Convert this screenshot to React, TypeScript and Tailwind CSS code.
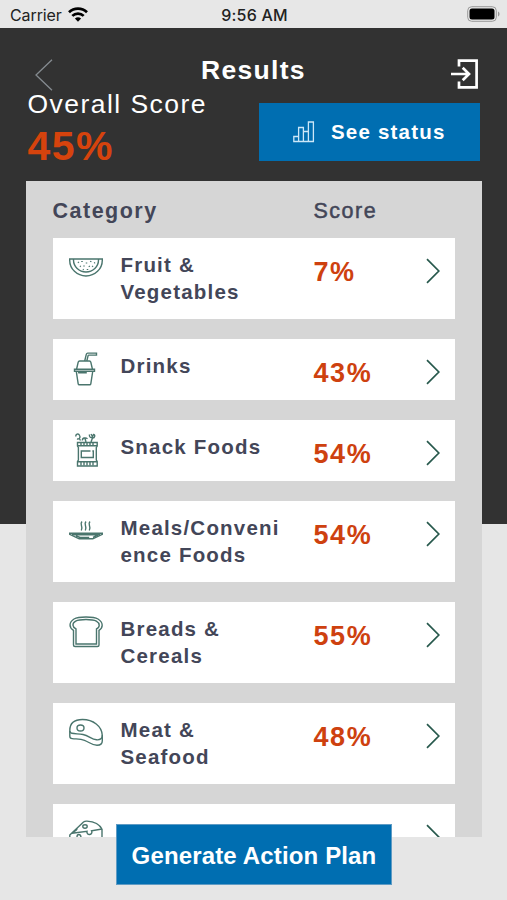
import { ReactNode } from "react";

interface CategoryProps {
  icon: ReactNode;
  name: string;
  score: string;
}

const iconClass = "block h-9 w-[34px] fill-none stroke-[#4a756d] stroke-[1.4]";

const MelonIcon = () => (
  <svg viewBox="0 -3.5 34 36" className={iconClass}>
    <path d="M.7 5.500h32.600v1.200a16.300 15.800 0 0 1-32.600 0z" />
    <path d="M4.500 5.500v1a12.500 12 0 0 0 25 0v-1" />
    <path
      d="M9 8.500l.8.800M13 7.500v1M17.500 9v1M22 7.500l-.5 1M26 9l-.8.600M11 12.500l.8.600M15 12v1M20 12.500l.6.900M24 12.500l-.8.700M14 15.800l.6.600M18.500 15.500v1"
      className="stroke-[1.5]"
    />
  </svg>
);

const DrinkIcon = () => (
  <svg viewBox="0 .5 34 36" className={iconClass}>
    <path d="M15.700 10.500l1.600-6.700c.2-.8.600-1.200 1.400-1.200h8.800v2h-7.600c-.5 0-.7.200-.8.600l-1.300 5.300" />
    <path d="M7.500 19l1.700-7.300c.2-.8.600-1.200 1.400-1.200h9.800c.8 0 1.200.4 1.400 1.200l1.700 7.300" />
    <path d="M5.500 18.800h20v2h-20zM7.300 21l1.900 12.300c.1.700.5 1 1.200 1h10.200c.7 0 1.100-.3 1.200-1L23.700 21M9.500 21l.3 1.200h8" />
  </svg>
);

const SnackIcon = () => (
  <svg viewBox="0 0 34 36" className={iconClass}>
    <path d="M8.500 10.500h19.700v3.500l-.9 1.500v12.500l.9 1.500v4.500H8.500v-4.500l.9-1.500V15.500l-.9-1.500z" />
    <path d="M9 13.800h19M9 29.800h19M12 10.500v3M15 10.500v3M18 10.500v3M21 10.500v3M24 10.500v3M12 30.500v3M15 30.500v3M18 30.500v3M21 30.500v3M24 30.500v3" />
    <path d="M21.500 19h-9.200v6.500h12V19h-1" />
    <path d="M7 4.500c-.7-2.500 2.500-3.300 3.500-1.200 1.500 2.200-.5 4.200-2.500 3.500M10 6l1.500 2.500M13.500 8.500c-.5-2.500 3-3.500 5-1.700M16 6.500l1 3.500M20.500 2.500c-.7 2.500 1.500 4 3 2.200l1-2.200c2 .2 1.500 3.700-1 3.500l-1.500 4M22 2l1.200 2" />
  </svg>
);

const MealIcon = () => (
  <svg viewBox="0 -2.5 34 36" className={iconClass}>
    <path d="M.7 17.700h32.600v1.100l-9.500 4.500H10.200L.7 18.800z" />
    <path d="M3 19.300h28M7 20.500l4.200 1.500h9M29 19.500l-5 2.500" />
    <path d="M13 6c-3 3 1.800 5-.7 9M17 6c-3 3 1.800 5-.7 9M21 6c-3 3 1.800 5-.7 9" />
  </svg>
);

const BreadIcon = () => (
  <svg viewBox="0 -.5 34 36" className={iconClass}>
    <path d="M17 2.500c5 0 9.500.5 12 2 5.500 3.300 5.300 8.800 1 11.300v14.700c0 1-.5 1.500-1.500 1.500H6c-1 0-1.500-.5-1.500-1.500V15.800c-4.600-2.500-4.800-8 .5-11.300 2.500-1.500 7-2 12-2z" />
    <path d="M17 5c4.300 0 8 .3 10.300 1.600 3.900 2.200 3.800 6 .2 7.800v15.100H7V14.400C3.200 12.600 2.800 8.800 6.700 6.600 9 5.300 12.700 5 17 5z" />
  </svg>
);

const MeatIcon = () => (
  <svg viewBox="0 0 34 36" className={iconClass}>
    <path d="M.8 15.500C.8 8 5.500 4.500 13.500 4.500 24 4.500 33 11 33.300 20.500c.1 3-2.300 4.700-5.800 4.300-5.300-.5-7.500-4.300-13.500-5.300-4.500-.8-7.500-.5-11.200-1.200C1.300 18 .8 17 .8 15.500z" />
    <path d="M.8 16v5.200c0 1.500.8 2.200 2.500 2.400 4.500.5 8.200.3 12.200 1.700 4.500 1.700 7.500 5 12.500 5 3.500 0 5.300-1.700 5.300-4.500V20" />
    <ellipse cx="11.500" cy="13" rx="3.500" ry="3" />
  </svg>
);

const CheeseIcon = () => (
  <svg viewBox="0 -1.5 34 36" className={iconClass}>
    <path d="M.8 17.500L14.500 4.500c1-.8 2-1 3.500-.9 7 .4 12.500 2.800 15 8.200v16L.8 31z" />
    <path d="M3 15.800l15-1.900a2.500 2.500 0 1 0 4.600-.6L33 11.500M4 14.500c2-.7 4-1.500 4-3.500" />
    <ellipse cx="16" cy="9" rx="2.200" ry="1.700" />
    <path d="M8 19.500c0-3.300 3.500-3.300 4 0" />
  </svg>
);

const categories: CategoryProps[] = [
  { icon: <MelonIcon />, name: "Fruit & Vegetables", score: "7%" },
  { icon: <DrinkIcon />, name: "Drinks", score: "43%" },
  { icon: <SnackIcon />, name: "Snack Foods", score: "54%" },
  { icon: <MealIcon />, name: "Meals/Convenience Foods", score: "54%" },
  { icon: <BreadIcon />, name: "Breads & Cereals", score: "55%" },
  { icon: <MeatIcon />, name: "Meat & Seafood", score: "48%" },
  { icon: <CheeseIcon />, name: "", score: "" },
];

const StatusBar = () => (
  <div className="grid h-7 grid-cols-3 items-center bg-[#e7e7e7] pl-[10px] pr-[7px] pt-[2px] font-['Inter',sans-serif] text-[16px] text-[#222]">
    <div className="flex items-center gap-[6px]">
      <span className="tracking-[-0.1px]">Carrier</span>
      <svg viewBox="0 0 20 15" className="-mt-px h-[15px] w-5 fill-none stroke-black stroke-[2.700]">
        <path d="M1 5.300a13 13 0 0 1 18 0M4.300 8.900a8.200 8.200 0 0 1 11.400 0" />
        <path d="M6.900 11.600a4.500 4.500 0 0 1 6.200 0L10 14.800z" className="fill-black stroke-none" />
      </svg>
    </div>
    <span className="-ml-px text-center font-medium tracking-[0.200px]">9:56 AM</span>
    <svg viewBox="0 0 33 16" className="-mt-[2px] h-4 w-[33px] justify-self-end">
      <rect x=".7" y=".7" width="28.600" height="14.600" rx="4" className="fill-none stroke-[#999] stroke-1" />
      <rect x="2.500" y="2.500" width="25" height="11" rx="2.500" />
      <path d="M31 5.500c2 .8 2 4.200 0 5z" className="fill-[#999]" />
    </svg>
  </div>
);

const Header = () => (
  <header className="px-[27px] text-white">
    <div className="flex h-[61px] items-end justify-between">
      <svg viewBox="0 0 18 32" className="-mb-[2px] ml-2 h-8 w-[18px] fill-none stroke-[#858b90] stroke-[1.300]">
        <path d="M17 .7L1 16l16 15.300" />
      </svg>
      <h1 className="mb-[3px] ml-[3px] text-[26.500px] font-bold leading-8 tracking-[1.300px]">Results</h1>
      <svg viewBox="0 0 28 30" className="mr-px h-[30px] w-7 fill-none stroke-white stroke-[2.700]">
        <path d="M8 7.500V1.600h17.600v26.800H8v-5.900M0 15h17M11.700 8.700L18 15l-6.300 6.300" />
      </svg>
    </div>
    <div className="flex h-[92px] justify-between">
      <div className="pl-[0.500px]">
        <p className="text-[26.500px] leading-[30px] tracking-[1.450px]">Overall Score</p>
        <p className="mt-[4px] text-[41px] font-bold leading-[46px] tracking-[1.500px] text-[#d6430d]">45%</p>
      </div>
      <button className="mt-[14px] flex h-[58px] w-[221px] items-center bg-[#006eb1] pl-[34px] pt-px text-[20.500px] font-bold tracking-[1.200px]">
        <svg viewBox="0 0 22 22" className="-mt-[2px] mr-[16px] h-[22px] w-[22px] fill-none stroke-[#cce7f8] stroke-[1.300]">
          <path d="M.8 15.500h4.800v5H.8zM5.600 6.500h4.800v14H5.600zM10.400 10.500h5v10h-5zM15.400 1h5v19.500h-5z" />
        </svg>
        See status
      </button>
    </div>
  </header>
);

const CategoryCard = ({ icon, name, score }: CategoryProps) => (
  <li
    className={`flex shrink-0 bg-white pl-4 pr-[15px] text-[#434658] ${
      name.length > 12 || !name ? "h-[81px]" : "h-[61px]"
    }`}
  >
    <div className="w-[52px] pt-3">{icon}</div>
    <h3 className="w-[193px] pt-[13px] text-[20.500px] font-bold leading-[27px] tracking-[1.200px]">
      <span className="block w-[169px] [overflow-wrap:anywhere]">{name}</span>
    </h3>
    <span className="pt-[19px] text-[27px] font-bold leading-[30px] tracking-[1.600px] text-[#ce410f]">{score}</span>
    <svg viewBox="0 0 14 26" className="ml-auto mt-5 h-[26px] w-[14px] fill-none stroke-[#28594d] stroke-[1.700]">
      <path d="M1 1.200L12.800 13 1 24.800" />
    </svg>
  </li>
);

export default function App() {
  return (
    <main className="flex h-[900px] w-full flex-col overflow-hidden bg-[linear-gradient(#323232_524px,#e6e6e6_524px)] font-['Liberation_Sans',sans-serif]">
      <StatusBar />
      <Header />
      <section className="mx-auto h-[656px] w-[456px] shrink-0 overflow-hidden bg-[#d6d6d6] px-[27px]">
        <div className="flex h-[57px] pt-[17px] text-[21.500px] leading-[27px] tracking-[1.500px] text-[#434658]">
          <h2 className="w-[261px] font-bold">Category</h2>
          <span className="[-webkit-text-stroke:0.500px_#434658]">Score</span>
        </div>
        <ul className="flex flex-col gap-5">
          {categories.map((category, index) => (
            <CategoryCard key={index} {...category} />
          ))}
        </ul>
      </section>
      <button className="relative -mt-[13px] ml-[116px] h-[61px] w-[276px] shrink-0 border border-[#5f9bc4] bg-[#006eb1] pt-[2px] text-[24px] font-bold tracking-[0.150px] text-white">
        Generate Action Plan
      </button>
    </main>
  );
}
